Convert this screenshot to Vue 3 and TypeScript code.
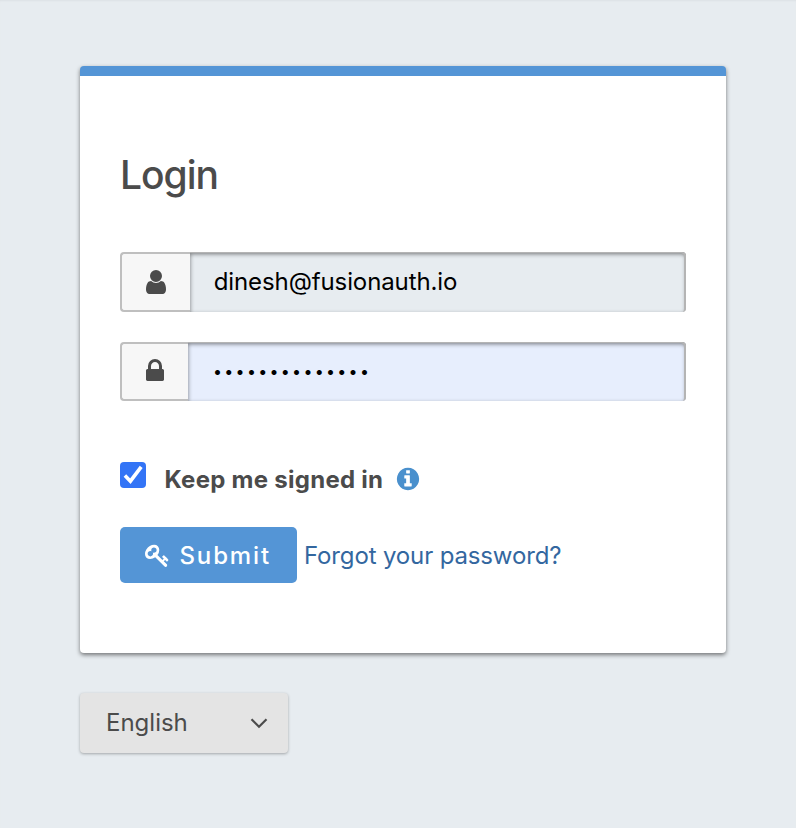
<script setup lang="ts">
import { ref } from 'vue'

const email = ref<string>('dinesh@fusionauth.io')
const maskedPassword = '•'.repeat(14)
const keepSignedIn = ref<boolean>(true)

const icons: Record<string, string> = {
  user: 'M1536 1399q0 109-62.5 187t-150.5 78h-854q-88 0-150.5-78t-62.5-187q0-85 8.5-160.5t31.5-152 58.5-131 94-89 134.5-34.5q131 128 313 128t313-128q76 0 134.5 34.5t94 89 58.5 131 31.5 152 8.5 160.5zm-256-887q0 159-112.5 271.5t-271.5 112.5-271.5-112.5-112.5-271.5 112.5-271.5 271.5-112.5 271.5 112.5 112.5 271.5z',
  lock: 'M640 768h512v-192q0-106-75-181t-181-75-181 75-75 181v192zm832 96v576q0 40-28 68t-68 28h-960q-40 0-68-28t-28-68v-576q0-40 28-68t68-28h32v-192q0-184 132-316t316-132 316 132 132 316v192h32q40 0 68 28t28 68z',
  info: 'M1152 1376v-160q0-14-9-23t-23-9h-96v-512q0-14-9-23t-23-9h-320q-14 0-23 9t-9 23v160q0 14 9 23t23 9h96v320h-96q-14 0-23 9t-9 23v160q0 14 9 23t23 9h448q14 0 23-9t9-23zm-128-896v-160q0-14-9-23t-23-9h-192q-14 0-23 9t-9 23v160q0 14 9 23t23 9h192q14 0 23-9t9-23zm640 416q0 209-103 385.5t-279.5 279.5-385.5 103-385.5-103-279.5-279.5-103-385.5 103-385.5 279.5-279.5 385.5-103 385.5 103 279.5 279.5 103 385.5z',
  key: 'M832 512q0-80-56-136t-136-56-136 56-56 136q0 42 19 83-41-19-83-19-80 0-136 56t-56 136 56 136 136 56 136-56 56-136q0-42-19-83 41 19 83 19 80 0 136-56t56-136zm851 704q0 17-49 66t-66 49q-9 0-28.5-16t-36.5-33-38.5-40-24.5-26l-96 96 220 220q28 28 28 68 0 42-39 81t-81 39q-40 0-68-28l-671-671q-176 131-365 131-163 0-265.5-102.5t-102.5-265.5q0-160 95-313t248-248 313-95q163 0 265.5 102.5t102.5 265.5q0 189-131 365l355 355 96-96q-3-3-26-24.5t-40-38.5-33-36.5-16-28.5q0-17 49-66t66-49q13 0 23 10 6 6 46 44.5t82 79.5 86.5 86 73 78 28.5 41z',
}
</script>

<template>
  <div class="page">
    <main class="panel">
      <h2 class="title">Login</h2>
      <form @submit.prevent>
        <div class="field">
          <span class="addon"><svg class="icon user" viewBox="0 0 1792 1792"><path :d="icons.user" /></svg></span>
          <div class="control email">{{ email }}</div>
        </div>
        <div class="field second">
          <span class="addon narrow"><svg class="icon lock" viewBox="0 0 1792 1792"><path :d="icons.lock" /></svg></span>
          <div class="control password">{{ maskedPassword }}</div>
        </div>
        <div class="remember" @click="keepSignedIn = !keepSignedIn">
          <span class="box">
            <svg v-if="keepSignedIn" viewBox="0 0 26 26"><path d="M4.9 13.6 10.4 19.2 21.2 4.8" /></svg>
          </span>
          <span class="label">Keep me signed in</span>
          <svg class="icon info" viewBox="0 0 1792 1792"><path :d="icons.info" /></svg>
        </div>
        <div class="actions">
          <button class="submit" type="submit">
            <svg class="icon key" viewBox="0 0 1792 1792"><path :d="icons.key" /></svg>
            <span>Submit</span>
          </button>
          <a class="forgot">Forgot your password?</a>
        </div>
      </form>
    </main>
    <div class="language">
      <span class="language-name">English</span>
      <svg class="chevron" viewBox="0 0 18 12"><path d="M1.5 2.2 9 9.7 16.5 2.2" /></svg>
    </div>
  </div>
</template>

<style>
body {
  background: #e7ecf0;
}
</style>

<style scoped>
.page {
  box-sizing: border-box;
  height: 828px;
  padding: 66px 70px 0 80px;
  background: #e7ecf0;
  box-shadow: inset 0 2px 2px -1px #dce1e5;
  color: #4b4b4b;
  font-family: Inter, "Liberation Sans", sans-serif;
  font-size: 24px;
}
.panel {
  box-sizing: border-box;
  width: 646px;
  height: 587px;
  padding: 69px 40px 0;
  border-top: 10px solid #5495d6;
  border-radius: 4px;
  background: #fff;
  box-shadow: 0 2px 4px rgba(0, 0, 0, 0.5);
}
.title {
  margin: 0 0 47px;
  height: 60px;
  line-height: 60px;
  font-size: 39px;
  font-weight: 500;
  letter-spacing: -1px;
}
.icon {
  display: block;
  flex: none;
  fill: currentColor;
}
.field {
  display: flex;
  height: 60px;
}
.second {
  height: 59px;
  margin-top: 30px;
}
.addon {
  box-sizing: border-box;
  display: flex;
  width: 70px;
  padding: 14px 0 0 19.6px;
  border: 2px solid #bfbfbf;
  border-right: 0;
  border-radius: 4px 0 0 4px;
  background: #f7f7f7;
}
.narrow {
  width: 68px;
  padding: 13px 0 0 19px;
}
.user,
.lock {
  width: 28px;
  height: 28px;
}
.control {
  box-sizing: border-box;
  flex: 1;
  border-radius: 0 4px 4px 0;
  color: #000;
  line-height: 59px;
  white-space: nowrap;
  box-shadow: inset -2px 1px 0 #b4b4b4, inset 0 2px 4px rgba(0, 0, 0, 0.5);
}
.email {
  padding-left: 23.7px;
  background: #e7ecf0;
  letter-spacing: -0.1px;
}
.password {
  padding-left: 25px;
  background: #e7eefd;
  font-size: 16px;
  letter-spacing: 2.3px;
  line-height: 59px;
}
.remember {
  display: flex;
  height: 36px;
  margin-top: 61px;
}
.box {
  width: 26px;
  height: 26px;
  border-radius: 4px;
  background: #3374f6;
}
.box svg {
  display: block;
  width: 26px;
  height: 26px;
  fill: none;
  stroke: #fff;
  stroke-width: 3.6;
}
.label {
  width: 218px;
  margin-left: 18.5px;
  line-height: 36px;
  font-weight: 700;
  letter-spacing: 0.27px;
  white-space: nowrap;
}
.info {
  width: 26px;
  height: 26px;
  margin: 4px 0 0 12.5px;
  color: #4a90cd;
}
.actions {
  display: flex;
  align-items: center;
  margin-top: 29px;
}
.submit {
  display: flex;
  align-items: center;
  width: 177px;
  height: 56px;
  padding: 0 0 0 25px;
  border: 0;
  border-radius: 5px;
  background: #5495d6;
  color: #fff;
  font: inherit;
  font-weight: 450;
  letter-spacing: 1.9px;
}
.key {
  width: 25px;
  height: 25px;
  margin: 1px 9.4px 0 0;
}
.forgot {
  margin-left: 7px;
  color: #33679f;
  letter-spacing: -0.14px;
  white-space: nowrap;
}
.language {
  box-sizing: border-box;
  display: flex;
  align-items: center;
  justify-content: space-between;
  width: 208px;
  height: 60px;
  margin-top: 40px;
  padding: 0 20px 0 26px;
  border-radius: 4px;
  background: #e4e4e4;
  box-shadow: 0 1px 3px rgba(0, 0, 0, 0.3);
}
.language-name {
  padding-bottom: 1px;
}
.chevron {
  width: 18px;
  height: 12px;
  fill: none;
  stroke: #4b4b4b;
  stroke-width: 2.2;
}
</style>
